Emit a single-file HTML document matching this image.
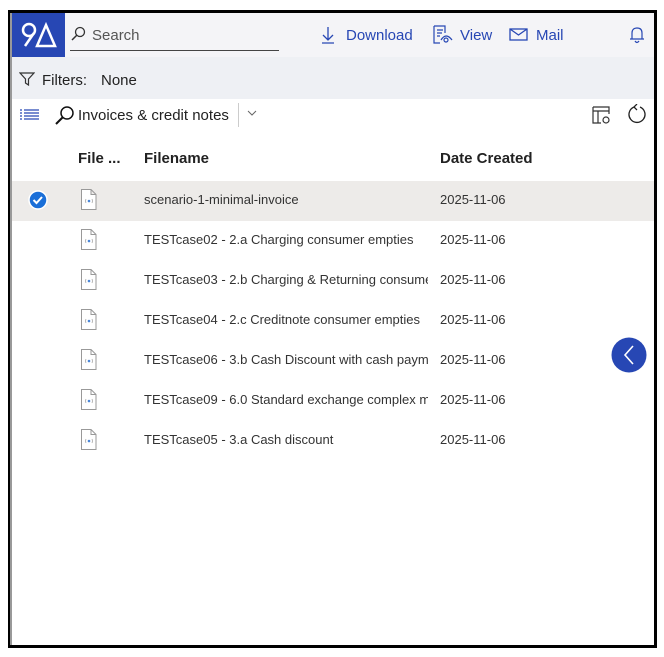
<!DOCTYPE html>
<html><head><style>
*{margin:0;padding:0;box-sizing:border-box}
body{width:664px;height:657px;background:#fff;position:relative;font-family:"Segoe UI","Liberation Sans",sans-serif;overflow:hidden}
.frame{position:absolute;left:8px;top:10px;width:649px;height:638px;border:3px solid #000;border-left-width:2px}
.lgray{position:absolute;left:10px;top:13px;width:2px;height:632px;background:#999}
.hdr{position:absolute;left:12px;top:13px;width:642px;height:44px;background:#f4f4f7}
.flt{position:absolute;left:12px;top:57px;width:642px;height:42px;background:#eef0f4}
.logo{position:absolute;left:12px;top:13px;width:53px;height:44px;background:#2747b4}
.t{position:absolute;white-space:nowrap}
.blue{color:#2747b4;font-size:15px}
.row{position:absolute;left:12px;width:642px;height:40px}
.c{font-size:13px;color:#333}
</style></head><body>
<div class="hdr"></div><div class="flt"></div>
<div class="logo"><svg width="53" height="44" viewBox="0 0 53 44"><circle cx="17" cy="17" r="6" fill="none" stroke="#fff" stroke-width="2.5"/><path d="M22 20 L13 33" stroke="#fff" stroke-width="2.5"/><path d="M34 12 L25 33 H43 Z" fill="none" stroke="#fff" stroke-width="2.5"/></svg></div>
<svg class="t" style="left:70px;top:26px" width="16" height="16"><circle cx="10" cy="6" r="4.5" fill="none" stroke="#333" stroke-width="1.3"/><path d="M7 9 L2 14" stroke="#333" stroke-width="1.5"/></svg>
<div class="t" style="left:92px;top:27px;font-size:15px;color:#555">Search</div>
<div class="t" style="left:70px;top:50px;width:209px;height:1px;background:#444"></div>
<svg class="t" style="left:319px;top:25px" width="18" height="20"><path d="M9 2 V15 M4 10 L9 15 L14 10 M3 18 H15" stroke="#2747b4" fill="none" stroke-width="1.3"/></svg>
<div class="t blue" style="left:346px;top:27px">Download</div>
<svg class="t" style="left:432px;top:24px" width="22" height="22"><path d="M2 2 H13 V9 M2 2 V19 H8 M5 6 H11 M5 9 H10 M5 12 H8" stroke="#2747b4" fill="none" stroke-width="1.2"/><circle cx="14" cy="16" r="2" fill="none" stroke="#2747b4" stroke-width="1.2"/><path d="M9 16 Q14 8 20 16" stroke="#2747b4" fill="none" stroke-width="1.2"/></svg>
<div class="t blue" style="left:460px;top:27px">View</div>
<svg class="t" style="left:509px;top:28px" width="20" height="14"><rect x="1" y="1" width="17" height="11" fill="none" stroke="#2747b4" stroke-width="1.3"/><path d="M1 1 L9.5 7 L18 1" stroke="#2747b4" fill="none" stroke-width="1.3"/></svg>
<div class="t blue" style="left:536px;top:27px">Mail</div>
<svg class="t" style="left:628px;top:25px" width="18" height="20"><path d="M4 14 V8 Q4 3 9 3 Q14 3 14 8 V14 H16 M2 14 H16 M7 16 Q9 19 11 16" stroke="#2747b4" fill="none" stroke-width="1.2"/></svg>
<svg class="t" style="left:19px;top:71px" width="16" height="16"><path d="M1 2 H15 L9.5 8 V14 L6.5 12 V8 Z" stroke="#333" fill="none" stroke-width="1.2"/></svg>
<div class="t" style="left:42px;top:72px;font-size:15px;color:#222">Filters:</div>
<div class="t" style="left:101px;top:72px;font-size:15px;color:#222">None</div>
<svg class="t" style="left:20px;top:109px" width="20" height="12"><g stroke="#2747b4" stroke-width="1.3"><path d="M0 1H2M0 4H2M0 7H2M0 10H2M4 1H19M4 4H19M4 7H19M4 10H19"/></g></svg>
<svg class="t" style="left:54px;top:105px" width="22" height="22"><circle cx="13" cy="8" r="6" fill="none" stroke="#111" stroke-width="1.5"/><path d="M9 12 L2 19" stroke="#111" stroke-width="2"/></svg>
<div class="t" style="left:78px;top:107px;font-size:15px;color:#222">Invoices &amp; credit notes</div>
<div class="t" style="left:238px;top:103px;width:1px;height:24px;background:#ccc"></div>
<svg class="t" style="left:247px;top:110px" width="10" height="6"><path d="M1 1 L5 5 L9 1" stroke="#666" fill="none"/></svg>
<svg class="t" style="left:592px;top:106px" width="22" height="20"><path d="M1 1 H17 V8 M1 1 V17 H9 M1 5 H17 M6 5 V17" stroke="#333" fill="none" stroke-width="1.2"/><circle cx="14" cy="14" r="3" fill="none" stroke="#333" stroke-width="1.2"/></svg>
<svg class="t" style="left:626px;top:104px" width="22" height="22"><path d="M8 3 A8 8 0 1 0 14 3 M8 3 L11 6 M8 3 L11 0" stroke="#222" fill="none" stroke-width="1.3"/></svg>
<div class="t" style="left:78px;top:150px;font-size:15px;font-weight:600;color:#222">File ...</div>
<div class="t" style="left:144px;top:150px;font-size:15px;font-weight:600;color:#222">Filename</div>
<div class="t" style="left:440px;top:150px;font-size:15px;font-weight:600;color:#222">Date Created</div>

<div class="row" style="top:181px;background:#edebe9"></div>
<svg class="t" style="left:28px;top:190px" width="20" height="20"><circle cx="10" cy="10" r="9" fill="#1b6fd8" stroke="#fff" stroke-width="1.5"/><path d="M5.5 10 L8.5 13 L14 7" stroke="#fff" fill="none" stroke-width="2"/></svg>

<div class="t c" style="left:144px;top:192px">scenario-1-minimal-invoice</div>
<div class="t c" style="left:144px;top:232px">TESTcase02 - 2.a Charging consumer empties</div>
<div class="t c" style="left:144px;top:272px;width:284px;overflow:hidden">TESTcase03 - 2.b Charging &amp; Returning consumer empties</div>
<div class="t c" style="left:144px;top:312px">TESTcase04 - 2.c Creditnote consumer empties</div>
<div class="t c" style="left:144px;top:352px;width:284px;overflow:hidden">TESTcase06 - 3.b Cash Discount with cash payment</div>
<div class="t c" style="left:144px;top:392px;width:284px;overflow:hidden">TESTcase09 - 6.0 Standard exchange complex model</div>
<div class="t c" style="left:144px;top:432px">TESTcase05 - 3.a Cash discount</div>
<div class="t c" style="left:440px;top:192px">2025-11-06</div>
<div class="t c" style="left:440px;top:232px">2025-11-06</div>
<div class="t c" style="left:440px;top:272px">2025-11-06</div>
<div class="t c" style="left:440px;top:312px">2025-11-06</div>
<div class="t c" style="left:440px;top:352px">2025-11-06</div>
<div class="t c" style="left:440px;top:392px">2025-11-06</div>
<div class="t c" style="left:440px;top:432px">2025-11-06</div>
<svg class="t" style="left:80px;top:189px" width="18" height="262"><defs><g id="f"><path d="M1.5 0.5 H11 L16 5.5 V20.5 H1.5 Z M11 0.5 V5.5 H16" fill="#fff" stroke="#999"/><circle cx="9" cy="12" r="1.3" fill="#4a86d8"/><path d="M6 10 Q5 12 6 14 M12 10 Q13 12 12 14" stroke="#aaa" fill="none" stroke-width="0.8"/></g></defs>
<use href="#f" y="0"/><use href="#f" y="40"/><use href="#f" y="80"/><use href="#f" y="120"/><use href="#f" y="160"/><use href="#f" y="200"/><use href="#f" y="240"/></svg>
<svg class="t" style="left:611px;top:337px" width="36" height="36"><circle cx="18" cy="18" r="17.5" fill="#2747b4"/><path d="M22 9 L14 18 L22 27" stroke="#fff" fill="none" stroke-width="1.6"/></svg>
<div class="frame"></div><div class="lgray"></div>
</body></html>
